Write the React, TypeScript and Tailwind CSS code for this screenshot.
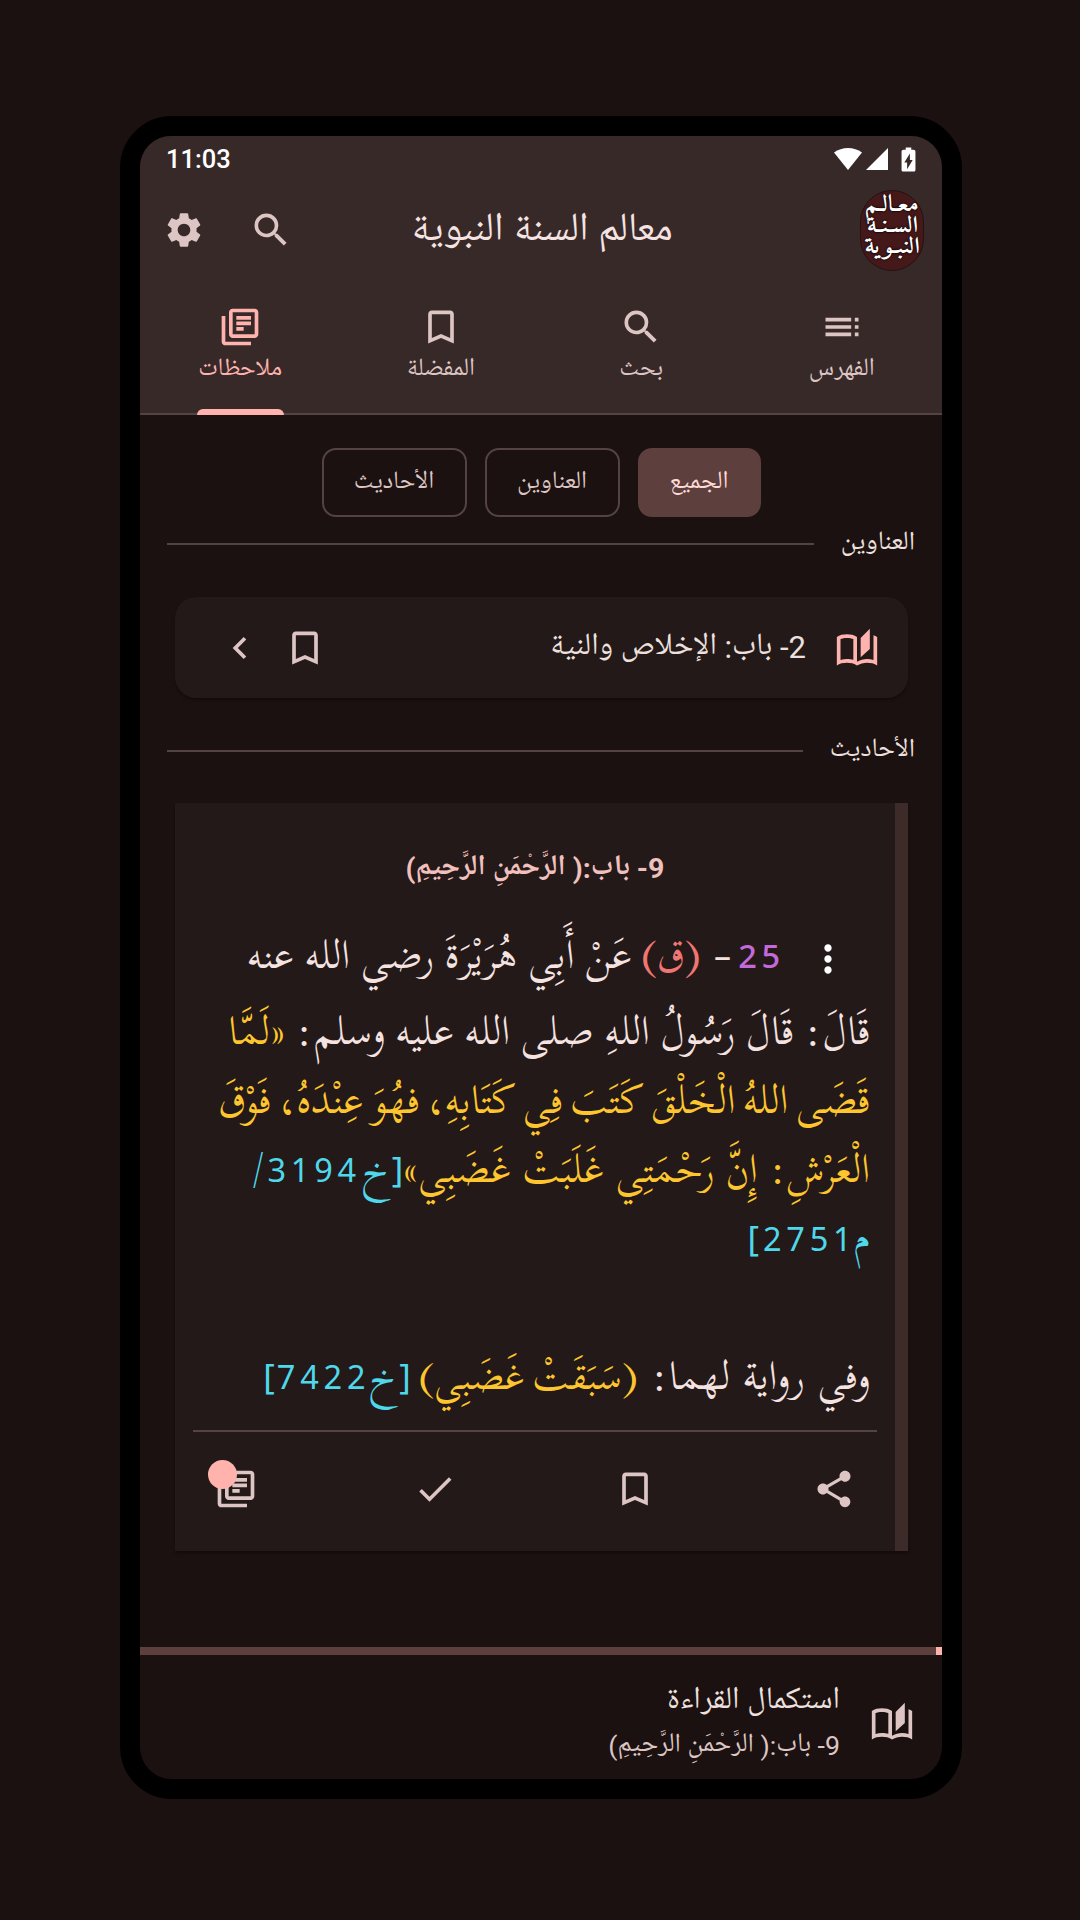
import React from 'react';
import {
  MdSettings, MdSearch, MdBookmarkBorder, MdToc, MdChevronLeft,
  MdShare, MdCheck, MdMoreVert, MdBatteryChargingFull,
} from 'react-icons/md';

const ui = "font-['Roboto','Noto_Naskh_Arabic_UI','Noto_Naskh_Arabic',sans-serif]";

function LibraryIcon({ className = '' }: { className?: string }) {
  return (
    <svg viewBox="0 0 24 24" fill="currentColor" className={`h-11 w-11 ${className}`}>
      <path d="M4 6H2v14c0 1.1.9 2 2 2h14v-2H4V6zm16-4H8c-1.1 0-2 .9-2 2v12c0 1.1.9 2 2 2h12c1.1 0 2-.9 2-2V4c0-1.1-.9-2-2-2zm0 14H8V4h12v12zM10 9h8v2h-8V9zm0 3h4v2h-4v-2zm0-6h8v2h-8V6z" />
    </svg>
  );
}

function BookIcon({ className = '' }: { className?: string }) {
  return (
    <svg viewBox="0 0 24 24" fill="currentColor" fillRule="evenodd" className={`h-11 w-11 ${className}`}>
      <path d="M19 1.500l-5 5v10.500l5-4.500v-11z" />
      <path d="M1 6v15.500C2.450 20.400 4.550 20 6.500 20c1.950 0 4.050.4 5.500 1.500 1.350-.85 3.800-1.500 5.500-1.500 1.950 0 4.050.4 5.500 1.500V6c-.6-.45-1.250-.75-2-1v13.500c-1.100-.35-2.300-.5-3.500-.5-1.700 0-4.150.65-5.500 1.500V6c-1.450-1.100-3.550-1.500-5.500-1.500S2.450 4.900 1 6zM10 18.410C9 18.130 7.700 18 6.500 18c-1.170 0-2.390.19-3.500.5V7.130c.91-.4 2.140-.63 3.500-.63s2.590.23 3.500.63v11.280z" />
    </svg>
  );
}

function StatusBar() {
  return (
    <div dir="ltr" className="flex h-[47px] items-center justify-between pl-[26px] pr-[19px] text-white">
      <span className="font-['Roboto'] text-[25.5px] font-medium leading-none">11:03</span>
      <div className="flex items-center pb-px">
        <svg viewBox="0 0 28 22" fill="currentColor" className="h-[22px] w-7"><path d="M14 22 0 4.600C4 1.600 9 0 14 0s10 1.600 14 4.600z" /></svg>
        <svg viewBox="0 0 22 22" fill="currentColor" className="ml-1 h-[22px] w-[22px]"><path d="M0 22 22 0v22z" /></svg>
        <MdBatteryChargingFull className="ml-[6px] size-[29px] scale-x-115" />
      </div>
    </div>
  );
}

function Logo() {
  return (
    <div className="flex h-[81px] w-[64px] flex-col items-center rounded-[32px] border border-[#241212] bg-[#451819] pt-[4px] font-['Amiri'] text-[23px] font-bold leading-[21px] text-white [text-shadow:0_0_2px_#000,0_0_1px_#000]">
      <span className="scale-x-115 whitespace-nowrap">معـالـم</span>
      <span className="scale-x-115 whitespace-nowrap">السـنـة</span>
      <span className="scale-x-115 whitespace-nowrap">النبـوية</span>
    </div>
  );
}

function Header() {
  return (
    <div className="flex h-[94px] items-center pl-[23px] pr-[18px]">
      <Logo />
      <h1 className="flex-1 pr-[69px] pt-[4px] text-center text-[40px] leading-none text-[#f5e3e1]">معالم السنة النبوية</h1>
      <MdSearch className="ml-[44px] size-11" />
      <MdSettings className="size-[42px]" />
    </div>
  );
}

const tabs = [
  { label: 'الفهرس', icon: <MdToc className="size-11" /> },
  { label: 'بحث', icon: <MdSearch className="size-11" /> },
  { label: 'المفضلة', icon: <MdBookmarkBorder className="size-11" /> },
  { label: 'ملاحظات', icon: <LibraryIcon />, active: true },
];

function Tabs() {
  return (
    <div className="grid h-[138px] grid-cols-4 border-b-2 border-[#534342]">
      {tabs.map((t) => (
        <div key={t.label} className={`relative flex flex-col items-center pt-[28px] ${t.active ? 'text-[#ffb3af]' : ''}`}>
          {t.icon}
          <span className="mt-[3px] text-[25px] leading-[36px]">{t.label}</span>
          {t.active && <span className="absolute -bottom-[2px] h-[6px] w-[87px] rounded-t-[6px] bg-[#ffb3af]" />}
        </div>
      ))}
    </div>
  );
}

function SectionTitle({ children }: { children: string }) {
  return (
    <div className="flex h-[50px] items-center gap-[27px] px-[27px]">
      <span className="pt-[4px] text-[26.500px] leading-none text-[#ede0de]">{children}</span>
      <span className="mt-[3px] h-[2px] flex-1 bg-[#534342]" />
    </div>
  );
}

const naskh = "font-['Scheherazade_New','Noto_Naskh_Arabic',serif] [font-feature-settings:'rlig'_0,'liga'_0]";
const num = "inline-block leading-none font-['Noto_Sans'] text-[32.500px] tracking-[4.800px]";
const bracket = "inline-block leading-none font-['Noto_Sans'] text-[35px]";

function Hadith() {
  return (
    <div className={`text-[40px] leading-[68px] whitespace-nowrap text-[#f5e3e1] ${naskh}`}>
      <div className="flex h-[77px] items-baseline pt-px">
        <span className="flex w-[85px] justify-center self-center text-white"><MdMoreVert className="size-11" /></span>
        <span className="w-[54px] font-['Noto_Sans'] text-[32.500px] font-medium tracking-[4.800px] text-[#c469dc]">25</span>
        <span className="w-[30px] font-['Noto_Sans'] text-[34px]">–</span>
        <span className="w-[69px] text-[#f07573]">(ق)</span>
        <span>عَنْ أَبِي هُرَيْرَةَ رضي الله عنه</span>
      </div>
      <div className="h-[69px]">
        <span>قَالَ: قَالَ رَسُولُ اللهِ صلى الله عليه وسلم: </span>
        <span className="text-[#fec62e]">«لَمَّا</span>
      </div>
      <div className="h-[69px] text-[#fec62e] [word-spacing:-3.100px]">قَضَى اللهُ الْخَلْقَ كَتَبَ فِي كَتَابِهِ، فهُوَ عِنْدَهُ، فَوْقَ</div>
      <div className="h-[69px]">
        <span className="text-[#fec62e] [word-spacing:0.600px]">الْعَرْشِ: إِنَّ رَحْمَتِي غَلَبَتْ غَضَبِي»</span>
        <span className="text-[#4fd8eb]"><span className={bracket}>[</span>خ<span className={`${num} mr-px`}>3194</span><span className="mr-[3px] inline-block">/</span></span>
      </div>
      <div className="h-[138px] text-[#4fd8eb]">م<span className={`${num} -mr-[3px]`}>2751</span><span className={`${bracket} mr-[4px]`}>]</span></div>
      <div className="h-[68px]">
        <span className="[word-spacing:2px]">وفي رواية لهما: </span>
        <span className="text-[39px] text-[#fec62e] [word-spacing:-3px]">(سَبَقَتْ غَضَبِي) </span>
        <span className="text-[#4fd8eb]"><span className={bracket}>[</span>خ<span className={`${num} -mr-px`}>7422</span><span className={`${bracket} mr-[2px]`}>]</span></span>
      </div>
    </div>
  );
}

export default function App() {
  return (
    <div className="flex h-[1920px] w-[1080px] bg-[#1b1110] pl-[120px] pt-[116px]">
      <div dir="rtl" className={`flex h-[1683px] w-[842px] flex-col rounded-[52px] border-[20px] border-black bg-[#1b1110] text-[#dcc5c3] ${ui}`}>
        <div className="h-[279px] shrink-0 rounded-t-[31px] bg-[#382929]">
          <StatusBar />
          <Header />
          <Tabs />
        </div>
        <div className="mt-[33px] flex justify-center gap-[18px] text-[25px] leading-[66px]">
          <span className="h-[69px] w-[123px] rounded-[14px] border-2 border-[#5d3f3d] bg-[#5d3f3d] text-center text-[#ffdad7]">الجميع</span>
          <span className="h-[69px] w-[135px] rounded-[14px] border-2 border-[#534342] text-center">العناوين</span>
          <span className="h-[69px] w-[145px] rounded-[14px] border-2 border-[#534342] text-center">الأحاديث</span>
        </div>
        <SectionTitle>العناوين</SectionTitle>
        <div className="ml-[35px] mr-[34px] mt-[30px] flex h-[101px] items-center rounded-[21px] bg-[#231918] pr-[29px] shadow-[0_2px_3px_rgba(0,0,0,0.3)]">
          <BookIcon className="text-[#ffb3af]" />
          <span className="mr-[29px] flex-1 text-[31px] leading-none text-[#ede0de]">2- باب: الإخلاص والنية</span>
          <MdBookmarkBorder className="size-11" />
          <MdChevronLeft className="ml-[43px] mr-[21px] size-11" />
        </div>
        <div className="h-[26px]" />
        <SectionTitle>الأحاديث</SectionTitle>
        <div className="ml-[35px] mr-[34px] mt-[29px] flex h-[748px] flex-col border-r-[13px] border-[#3d2b2a] bg-[#231918] px-[18px] shadow-[0_2px_3px_rgba(0,0,0,0.3)]">
          <h2 className="mt-[46px] mb-[31px] text-center text-[28.500px] font-bold leading-[40px] text-[#f1c0bd]">9- باب:( الرَّحْمَنِ الرَّحِيمِ)</h2>
          <div className="h-[510px] px-[7px]"><Hadith /></div>
          <div className="h-[2px] bg-[#534342]" />
          <div className="mt-[35px] flex justify-between px-[21px]">
            <MdShare className="size-11" />
            <MdBookmarkBorder className="size-11" />
            <MdCheck className="size-11" />
            <span className="relative">
              <LibraryIcon />
              <span className="absolute -left-[6px] -top-[7px] size-[29px] rounded-full bg-[#ffb3ac]" />
            </span>
          </div>
        </div>
        <div className="mt-[96px] h-[8px] bg-[#5d3f3d]"><div className="h-full w-[6px] bg-[#ffb3af]" /></div>
        <div className="flex flex-1 items-center pr-[28px] pt-[9px]">
          <BookIcon />
          <div className="mr-[30px] flex flex-col pt-[5px]">
            <span className="text-[31.200px] leading-[44px] text-[#ede0de]">استكمال القراءة</span>
            <span className="text-[26.700px] leading-[44px]">9- باب:( الرَّحْمَنِ الرَّحِيمِ)</span>
          </div>
        </div>
      </div>
    </div>
  );
}
